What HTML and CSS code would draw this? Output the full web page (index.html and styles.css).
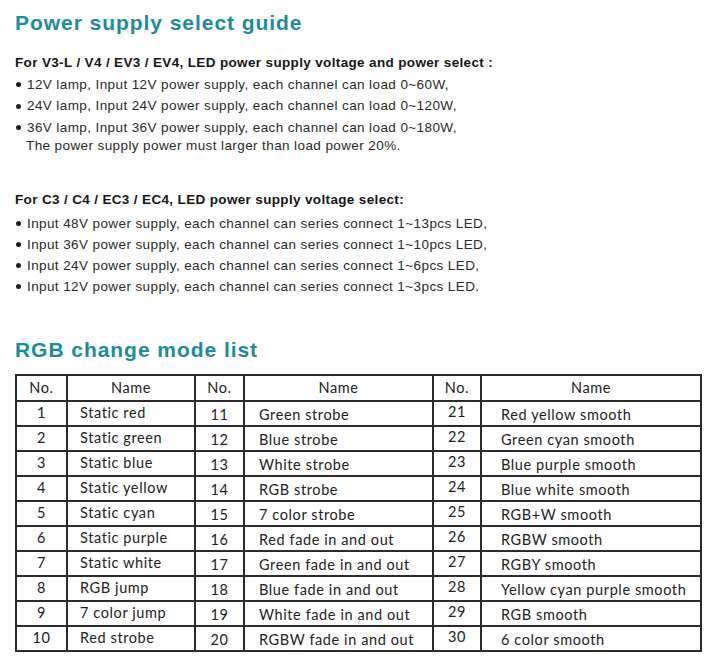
FILE: index.html
```html
<!DOCTYPE html>
<html lang="en">
<head>
<meta charset="utf-8">
<title>Power supply select guide</title>
<link rel="stylesheet" href="styles.css">
</head>
<body>
<main class="page">
  <h1 class="title">Power supply select guide</h1>
  <section class="block block-first">
    <p class="lead">For V3-L / V4 / EV3 / EV4, LED power supply voltage and power select :</p>
    <ul class="bullets">
      <li>12V lamp, Input 12V power supply, each channel can load 0~60W,</li>
      <li>24V lamp, Input 24V power supply, each channel can load 0~120W,</li>
      <li>36V lamp, Input 36V power supply, each channel can load 0~180W,<span class="cont">The power supply power must larger than load power 20%.</span></li>
    </ul>
  </section>
  <section class="block block-second">
    <p class="lead lead-gap">For C3 / C4 / EC3 / EC4, LED power supply voltage select:</p>
    <ul class="bullets bullets-tight">
      <li>Input 48V power supply, each channel can series connect 1~13pcs LED,</li>
      <li>Input 36V power supply, each channel can series connect 1~10pcs LED,</li>
      <li>Input 24V power supply, each channel can series connect 1~6pcs LED,</li>
      <li>Input 12V power supply, each channel can series connect 1~3pcs LED.</li>
    </ul>
  </section>
  <h2 class="title title-second">RGB change mode list</h2>
  <table class="modes">
    <colgroup>
      <col class="c-no1"><col class="c-name1"><col class="c-no2"><col class="c-name2"><col class="c-no3"><col class="c-name3">
    </colgroup>
    <thead>
      <tr><th>No.</th><th>Name</th><th>No.</th><th>Name</th><th>No.</th><th>Name</th></tr>
    </thead>
    <tbody>
      <tr><td class="no">1</td><td class="nm nm1">Static red</td><td class="no low">11</td><td class="nm nm2 low">Green strobe</td><td class="no high">21</td><td class="nm nm3 low">Red yellow smooth</td></tr>
      <tr><td class="no">2</td><td class="nm nm1">Static green</td><td class="no low">12</td><td class="nm nm2 low">Blue strobe</td><td class="no high">22</td><td class="nm nm3 low">Green cyan smooth</td></tr>
      <tr><td class="no">3</td><td class="nm nm1">Static blue</td><td class="no low">13</td><td class="nm nm2 low">White strobe</td><td class="no high">23</td><td class="nm nm3 low">Blue purple smooth</td></tr>
      <tr><td class="no">4</td><td class="nm nm1">Static yellow</td><td class="no low">14</td><td class="nm nm2 low">RGB strobe</td><td class="no high">24</td><td class="nm nm3 low">Blue white smooth</td></tr>
      <tr><td class="no">5</td><td class="nm nm1">Static cyan</td><td class="no low">15</td><td class="nm nm2 low">7 color strobe</td><td class="no high">25</td><td class="nm nm3 low">RGB+W smooth</td></tr>
      <tr><td class="no">6</td><td class="nm nm1">Static purple</td><td class="no low">16</td><td class="nm nm2 low">Red fade in and out</td><td class="no high">26</td><td class="nm nm3 low">RGBW smooth</td></tr>
      <tr><td class="no">7</td><td class="nm nm1">Static white</td><td class="no low">17</td><td class="nm nm2 low">Green fade in and out</td><td class="no high">27</td><td class="nm nm3 low">RGBY smooth</td></tr>
      <tr><td class="no">8</td><td class="nm nm1">RGB jump</td><td class="no low">18</td><td class="nm nm2 low">Blue fade in and out</td><td class="no high">28</td><td class="nm nm3 low">Yellow cyan purple smooth</td></tr>
      <tr><td class="no">9</td><td class="nm nm1">7 color jump</td><td class="no low">19</td><td class="nm nm2 low">White fade in and out</td><td class="no high">29</td><td class="nm nm3 low">RGB smooth</td></tr>
      <tr><td class="no">10</td><td class="nm nm1">Red strobe</td><td class="no low">20</td><td class="nm nm2 low">RGBW fade in and out</td><td class="no high">30</td><td class="nm nm3 low">6 color smooth</td></tr>
    </tbody>
  </table>
</main>
</body>
</html>
```

FILE: styles.css
```css
html, body {
  margin: 0;
  padding: 0;
  background: #ffffff;
}

.page {
  padding: 11px 0 0 15px;
  font-family: "Liberation Sans", Arial, sans-serif;
  color: #2a2a2a;
}

.title {
  margin: 0;
  font-size: 21px;
  line-height: 24px;
  font-weight: bold;
  color: #1b8c9c;
  letter-spacing: 0.95px;
}

.block {
  font-size: 13.5px;
}

.block-first {
  margin-top: 17px;
}

.block-second {
  margin-top: 35px;
}

.lead {
  margin: 0;
  font-weight: bold;
  color: #161616;
  line-height: 21.5px;
  letter-spacing: 0.35px;
}

.lead-gap {
  margin-bottom: 2px;
}

.bullets {
  list-style: none;
  margin: 0;
  padding: 0;
  line-height: 21.5px;
  letter-spacing: 0.4px;
}

.bullets-tight {
  line-height: 21px;
}

.bullets li {
  position: relative;
  padding-left: 12px;
}

.bullets li::before {
  content: "";
  position: absolute;
  left: 1px;
  top: 0.5em;
  margin-top: 2px;
  width: 5px;
  height: 5px;
  border-radius: 50%;
  background: #1e1e1e;
}

.cont {
  display: block;
  line-height: 16px;
  margin-left: -1px;
}

.title-second {
  margin-top: 41px;
}

.modes {
  margin-top: 12px;
  border-collapse: collapse;
  table-layout: fixed;
  width: 685px;
  font-family: Lato, "Open Sans", sans-serif;
  font-size: 14.5px;
  line-height: 18px;
  color: #222;
  letter-spacing: 0.6px;
}

.c-no1 { width: 51px; }
.c-name1 { width: 128px; }
.c-no2 { width: 49px; }
.c-name2 { width: 189px; }
.c-no3 { width: 48px; }
.c-name3 { width: 220px; }

.modes th,
.modes td {
  border: 2px solid #2b2b2b;
  font-weight: normal;
  white-space: nowrap;
  overflow: hidden;
  vertical-align: top;
}

.modes th {
  padding: 3px 0 3px;
  text-align: center;
}

.modes td {
  padding: 2px 0 3px;
}

.modes td.low {
  padding-top: 4px;
  padding-bottom: 1px;
}

.modes td.high {
  padding-top: 1px;
  padding-bottom: 4px;
}

.modes .no {
  text-align: center;
}

.modes td.nm1 { padding-left: 12px; }
.modes td.nm2 { padding-left: 14px; }
.modes td.nm3 { padding-left: 19px; }
```
